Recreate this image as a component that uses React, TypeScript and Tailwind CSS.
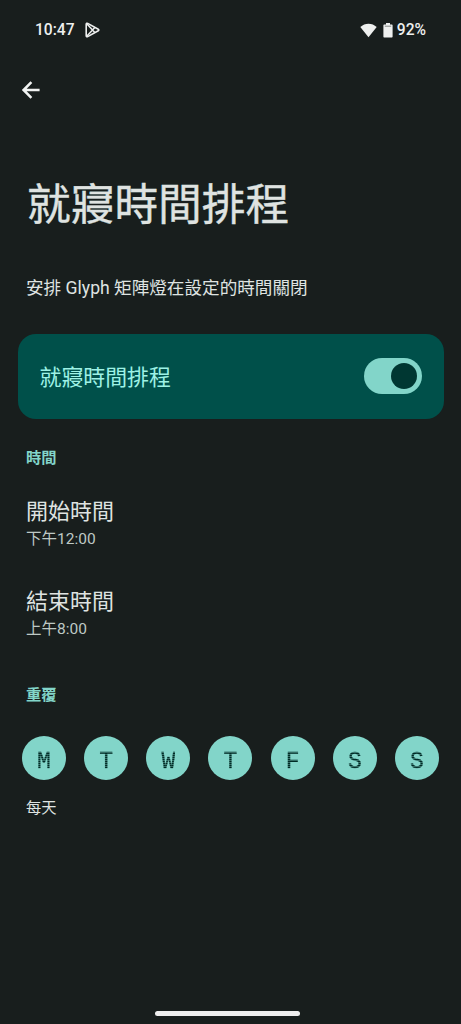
import { useState } from 'react'

interface TimeItem {
  title: string
  value: string
}

const timeItems: TimeItem[] = [
  { title: '開始時間', value: '下午12:00' },
  { title: '結束時間', value: '上午8:00' },
]

const days = ['M', 'T', 'W', 'T', 'F', 'S', 'S']

function StatusBar() {
  return (
    <header className="flex h-[60px] items-center justify-between pl-[35px] pr-[35px] text-[15.6px] font-medium leading-none text-[#eef0ef]">
      <div className="flex items-center gap-[10px]">
        <span className="pt-[2px]">10:47</span>
        <svg width="15" height="16" viewBox="0 0 15 16" fill="none" stroke="currentColor" strokeWidth="1.6" strokeLinejoin="round">
          <path d="M1.2 2.2c0-.9.8-1.2 1.5-.8L13.3 7.2c.7.4.7 1.2 0 1.6L2.7 14.6c-.7.4-1.5.1-1.5-.8z" />
          <path d="M1.8 1.8L9.8 10.6M1.8 14.2L9.8 5.4" strokeWidth="1.5" />
        </svg>
      </div>
      <div className="flex items-center">
        <svg width="17" height="15" viewBox="0 0 17 15" fill="currentColor">
          <path d="M8.5 14.2L.3 4.1C4.8-.4 12.2-.4 16.7 4.1z" />
        </svg>
        <svg className="ml-[6px] mr-[4px]" width="10" height="15" viewBox="0 0 10 15" fill="currentColor">
          <path d="M3 0h4v1.5h1.6c.6 0 1 .4 1 1v11c0 .6-.4 1-1 1H1.4c-.6 0-1-.4-1-1v-11c0-.6.4-1 1-1H3z" />
          <path d="M1.8 3.2h6.4" stroke="#181e1d" strokeWidth=".5" />
        </svg>
        <span className="pt-[2px]">92%</span>
      </div>
    </header>
  )
}

export default function App() {
  const [enabled, setEnabled] = useState(true)
  const [selected, setSelected] = useState(days.map(() => true))

  const toggleDay = (index: number) => {
    setSelected(selected.map((on, i) => (i === index ? !on : on)))
  }

  return (
    <div
      lang="zh-Hant"
      className="flex h-[1024px] w-full flex-col overflow-hidden bg-[#181e1d] font-['Roboto','Noto_Sans_CJK_TC',sans-serif] text-[#dfe3e1]"
    >
      <StatusBar />

      <button aria-label="返回" className="ml-[22px] mt-[20px] h-5 w-[18px] text-[#f1f3f2]">
        <svg width="18" height="20" viewBox="0 0 18 20" fill="none" stroke="currentColor" strokeWidth="2.5">
          <path d="M17.6 10H1.8M9.4 2.2L1.6 10l7.8 7.8" />
        </svg>
      </button>

      <h1 className="ml-[27px] mt-[75px] h-[60px] whitespace-nowrap text-[43.7px] leading-[60px] [-webkit-text-stroke:0.4px]">就寢時間排程</h1>
      <p className="ml-[26px] mt-[41px] h-6 whitespace-nowrap text-[17.6px] leading-6">安排 Glyph 矩陣燈在設定的時間關閉</p>

      {/* Main switch */}
      <section className="ml-[17.5px] mr-[17.5px] mt-[34px] flex h-[84.5px] items-center justify-between rounded-[18px] bg-[#00504a] pl-[22px] pr-[21.5px]">
        <span className="pt-[3px] text-[21.9px] leading-8 text-[#9ef2e5]">就寢時間排程</span>
        <button
          role="switch"
          aria-checked={enabled}
          aria-label="就寢時間排程"
          onClick={() => setEnabled(!enabled)}
          className={`flex h-9 w-[58px] items-center rounded-full px-[5px] ${enabled ? 'justify-end bg-[#82d5c9]' : 'justify-start bg-[#3f4946]'}`}
        >
          <span className="h-[26px] w-[26px] rounded-full bg-[#003732]" />
        </button>
      </section>

      <h2 className="ml-[26px] mt-[29.5px] h-5 text-[15.3px] font-bold leading-5 text-[#82d5c9]">時間</h2>
      <div className="ml-[26px] mt-[28px] flex flex-col gap-[34px]">
        {timeItems.map((item) => (
          <div key={item.title} className="h-14">
            <div className="h-8 text-[22px] leading-8">{item.title}</div>
            <div className="h-6 text-[15.5px] leading-[23px] text-[#bec9c5]">{item.value}</div>
          </div>
        ))}
      </div>

      {/* Repeat */}
      <h2 className="ml-[26px] mt-[43px] h-5 text-[15.3px] font-bold leading-5 text-[#82d5c9]">重覆</h2>
      <div className="mt-[31px] flex justify-between px-[22px]">
        {days.map((day, index) => (
          <button
            key={index}
            aria-pressed={selected[index]}
            onClick={() => toggleDay(index)}
            className={`flex h-11 w-11 items-center justify-center rounded-full pt-2 font-['Liberation_Mono',monospace] text-[23px] leading-none [-webkit-text-stroke:0.3px] ${selected[index] ? 'bg-[#82d5c9] text-[#002b26]' : 'bg-[#3f4946] text-[#bec9c5]'}`}
          >
            {/* fine grid breaks the strokes into dots */}
            <span className="[mask-image:repeating-linear-gradient(to_bottom,#000_0_1px,#0009_1px_2px)]">{day}</span>
          </button>
        ))}
      </div>
      <p className="ml-[26px] mt-[18px] h-5 text-[15.3px] leading-5">每天</p>

      <div className="ml-[155px] mb-[8.5px] mt-auto h-[5px] w-[145px] rounded-full bg-[#eeeeee]" />
    </div>
  )
}
